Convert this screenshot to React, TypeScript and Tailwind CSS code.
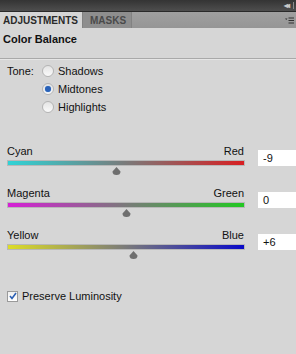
import React from "react";

const font = { fontFamily: '"Liberation Sans", Arial, sans-serif' };

function Radio({ checked }: { checked?: boolean }) {
  return (
    <span className="flex h-[12px] w-[12px] items-center justify-center rounded-full border border-[#b4b4b4] bg-gradient-to-b from-[#e4e4e4] to-[#fafafa]">
      {checked && <span className="h-[6px] w-[6px] rounded-full bg-[#2a62b8] shadow-[0_0_1px_#6fa0e0]" />}
    </span>
  );
}

function Thumb() {
  return (
    <svg width="9" height="8" viewBox="0 0 9 8">
      <path d="M4.5 0 L8.5 4.5 Q8.5 8 4.5 8 Q0.5 8 0.5 4.5 Z" fill="#6f6f6f" />
    </svg>
  );
}

function Slider({
  left,
  right,
  from,
  to,
  value,
  pos,
}: {
  left: string;
  right: string;
  from: string;
  to: string;
  value: string;
  pos: number;
}) {
  return (
    <div className="flex items-start">
      <div className="w-[245px] pl-[7px]">
        <div className="flex justify-between text-[11px] leading-[12px] text-[#111]">
          <span>{left}</span>
          <span className="pr-[1px]">{right}</span>
        </div>
        <div
          className="mt-[3px] h-[6px] w-[238px] border border-[#b8b8b8]"
          style={{ background: `linear-gradient(to right, ${from}, #7a7a7a 50%, ${to})` }}
        />
        <div className="relative h-[9px]">
          <div className="absolute top-[1px]" style={{ left: pos }}>
            <Thumb />
          </div>
        </div>
      </div>
      <div className="ml-[13px] mt-[5px] flex h-[16px] flex-1 items-center bg-white pl-[5px] text-[11px] text-[#111]">
        {value}
      </div>
    </div>
  );
}

export default function App() {
  return (
    <div className="h-[354px] w-[296px] overflow-hidden bg-[#d6d6d6]" style={font}>
      {/* panel title bar */}
      <div className="flex h-[11px] items-center justify-end bg-gradient-to-b from-[#343434] to-[#4e4e4e] pr-[2px]">
        <span className="text-[8px] font-bold leading-none tracking-[-2px] text-[#c8c8c8]">◂◂</span>
        <span className="ml-[5px] h-[7px] w-px bg-[#8a8a8a]" />
      </div>

      {/* tabs */}
      <div className="flex h-[17px] items-stretch border-t border-[#2a2a2a] bg-gradient-to-b from-[#a0a0a0] to-[#959595]">
        <div className="flex w-[82px] items-center bg-[#d6d6d6] pl-[3px] text-[10px] font-bold text-[#2a2a2a]">
          ADJUSTMENTS
        </div>
        <div className="flex w-[50px] items-center border-l border-r border-[#828282] bg-[#8e8e8e] pl-[7px] text-[10px] font-bold text-[#4a4a4a]">
          MASKS
        </div>
        <div className="flex flex-1 items-center justify-end pr-[2px]">
          <svg width="9" height="7" viewBox="0 0 9 7">
            <path d="M0 1.5 L2.5 1.5 L1.25 3 Z" fill="#303030" />
            <rect x="3.5" y="0.5" width="5.5" height="1" fill="#303030" />
            <rect x="3.5" y="3" width="5.5" height="1" fill="#303030" />
            <rect x="3.5" y="5.5" width="5.5" height="1" fill="#303030" />
          </svg>
        </div>
      </div>

      {/* header */}
      <div className="px-[3px] pt-[4px] text-[11px] font-bold leading-[14px] text-[#111]">Color Balance</div>
      <div className="mt-[12px] h-px bg-[#a9a9a9]" />
      <div className="h-px bg-[#e6e6e6]" />

      {/* tone */}
      <div className="flex pl-[7px] pt-[4px] text-[11px] leading-[14px] text-[#111]">
        <span className="w-[35px]">Tone:</span>
        <div className="flex flex-col gap-[4px]">
          <div className="flex h-[14px] items-center gap-[4px]">
            <Radio />
            <span>Shadows</span>
          </div>
          <div className="flex h-[14px] items-center gap-[4px]">
            <Radio checked />
            <span>Midtones</span>
          </div>
          <div className="flex h-[14px] items-center gap-[4px]">
            <Radio />
            <span>Highlights</span>
          </div>
        </div>
      </div>

      {/* sliders */}
      <div className="mt-[31px] flex flex-col gap-[12px]">
        <Slider left="Cyan" right="Red" from="#2fd3d6" to="#d81f22" value="-9" pos={105} />
        <Slider left="Magenta" right="Green" from="#d61fd6" to="#22c822" value="0" pos={115} />
        <Slider left="Yellow" right="Blue" from="#dcdc28" to="#0a0ac8" value="+6" pos={122} />
      </div>

      {/* preserve luminosity */}
      <label className="mt-[29px] flex items-center gap-[4px] pl-[7px] text-[11px] text-[#111]">
        <span className="flex h-[11px] w-[11px] items-center justify-center border border-[#9a9a9a] bg-gradient-to-b from-[#f0f0f0] to-white">
          <svg width="8" height="8" viewBox="0 0 8 8">
            <path d="M1 4 L3 6.5 L7 1" stroke="#2b5fb4" strokeWidth="1.6" fill="none" />
          </svg>
        </span>
        <span>Preserve Luminosity</span>
      </label>
    </div>
  );
}
